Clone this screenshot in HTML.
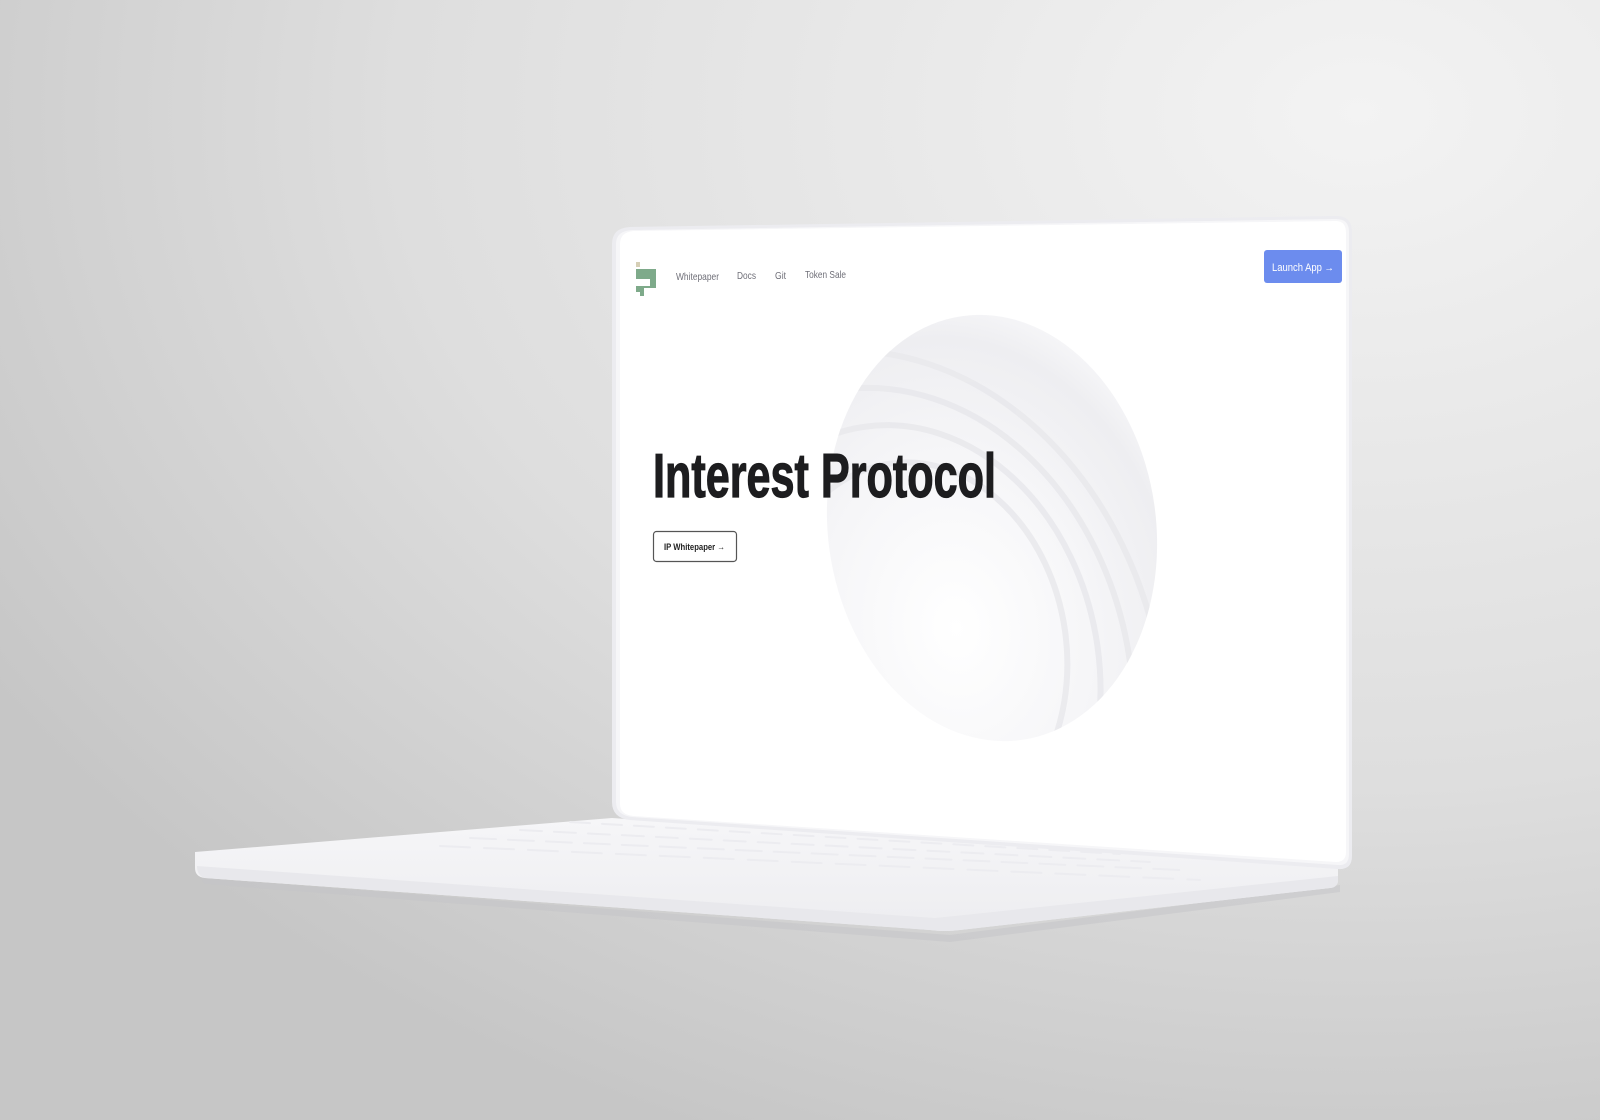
<!DOCTYPE html>
<html><head><meta charset="utf-8"><style>
html,body{margin:0;padding:0;width:1600px;height:1120px;overflow:hidden}
body{background:#d8d8d8}
svg{display:block}
</style></head><body>
<svg width="1600" height="1120" viewBox="0 0 1600 1120" xmlns="http://www.w3.org/2000/svg">
<defs>
<radialGradient id="bg" cx="0.85" cy="0.1" r="1">
<stop offset="0" stop-color="#f3f3f3"/><stop offset="0.6" stop-color="#dedede"/><stop offset="1" stop-color="#c6c6c6"/>
</radialGradient>
<radialGradient id="sph" cx="0.35" cy="0.72" r="0.8">
<stop offset="0" stop-color="#ffffff"/><stop offset="0.5" stop-color="#f6f6f8"/><stop offset="0.85" stop-color="#eeeef1"/><stop offset="1" stop-color="#f8f8fa"/>
</radialGradient>
<linearGradient id="base" x1="0" y1="0" x2="0" y2="1">
<stop offset="0" stop-color="#f6f6f8"/><stop offset="1" stop-color="#ededf0"/>
</linearGradient>
<clipPath id="scr"><path d="M628 244 Q628 232 642 231 L1336 221 Q1346 221 1346 233 L1346 852 Q1346 862 1336 862 L640 816 Q628 815 628 804 Z"/></clipPath>
<clipPath id="sc"><ellipse cx="992" cy="528" rx="164" ry="214" transform="rotate(-8 992 528)"/></clipPath>
</defs>
<rect width="1600" height="1120" fill="url(#bg)"/>
<path d="M200 878 L950 935 L1340 885 L1340 892 L950 942 L205 884 Z" fill="#c4c4c7" opacity="0.5"/>
<path d="M195 852 L612 818 L1338 866 L1338 880 Q1338 887 1330 888 L960 930 Q945 932 930 930 L205 878 Q195 877 195 868 Z" fill="url(#base)"/>
<path d="M197 866 L935 918 L1338 876 L1338 882 Q1336 888 1330 888 L960 930 Q945 932 930 930 L205 878 Q197 876 197 866 Z" fill="#e8e8ec"/>
<g stroke="#ececf0" stroke-width="2" stroke-linecap="round">
<path d="M440 846 L1200 880" stroke-dasharray="30 14"/>
<path d="M470 838 L1180 870" stroke-dasharray="26 12"/>
<path d="M520 830 L1150 862" stroke-dasharray="22 12"/>
<path d="M570 822 L1120 854" stroke-dasharray="20 12"/>
</g>
<path d="M612 244 Q612 228 630 227 L1336 216 Q1352 216 1352 232 L1352 856 Q1352 870 1338 869 L630 820 Q612 818 612 802 Z" fill="#ececf0"/>
<path d="M616 244 Q616 231 632 230 L1336 219 Q1349 219 1349 232 L1349 854 Q1349 866 1338 865 L632 817 Q616 815 616 802 Z" fill="#f6f6f8"/>
<path d="M620 244 Q620 232 634 231 L1336 221 Q1346 221 1346 233 L1346 852 Q1346 862 1336 862 L634 816 Q620 815 620 804 Z" fill="#ffffff"/>
<g clip-path="url(#scr)">
<ellipse cx="992" cy="528" rx="164" ry="214" transform="rotate(-8 992 528)" fill="url(#sph)"/>
<g clip-path="url(#sc)" fill="none" stroke="#e9e9ed" stroke-width="6" opacity="0.9">
<ellipse cx="900" cy="640" rx="150" ry="190" transform="rotate(-8 992 528)"/>
<ellipse cx="880" cy="660" rx="200" ry="250" transform="rotate(-8 992 528)"/>
<ellipse cx="860" cy="680" rx="250" ry="310" transform="rotate(-8 992 528)"/>
<ellipse cx="840" cy="700" rx="300" ry="370" transform="rotate(-8 992 528)"/>
</g>
</g>
<rect x="636" y="262" width="4" height="5" fill="#d6cfb6"/>
<path d="M636 269 H656 V288 H644 V296 H640 V292 H636 V286 H650 V279 H636 Z" fill="#7eaa8a"/>
<g font-family="Liberation Sans, sans-serif" fill="#6f6f78" font-size="10.5">
<text x="676" y="280" textLength="43" lengthAdjust="spacingAndGlyphs">Whitepaper</text>
<text x="737" y="279" textLength="19" lengthAdjust="spacingAndGlyphs">Docs</text>
<text x="775" y="279" textLength="11" lengthAdjust="spacingAndGlyphs">Git</text>
<text x="805" y="278" textLength="41" lengthAdjust="spacingAndGlyphs">Token Sale</text>
</g>
<rect x="1264" y="250" width="78" height="33" rx="3" fill="#6c8cee"/>
<text x="1272" y="271" font-family="Liberation Sans, sans-serif" font-size="11" fill="#ffffff" textLength="62" lengthAdjust="spacingAndGlyphs">Launch App →</text>
<text x="653" y="497" font-family="Liberation Sans, sans-serif" font-weight="bold" font-size="62" fill="#1d1d1f" stroke="#1d1d1f" stroke-width="1.2" textLength="343" lengthAdjust="spacingAndGlyphs">Interest Protocol</text>
<rect x="653.5" y="531.5" width="83" height="30" rx="3" fill="#fff" stroke="#555" stroke-width="1.2"/>
<text x="664" y="550" font-family="Liberation Sans, sans-serif" font-weight="bold" font-size="9.5" fill="#222" textLength="61" lengthAdjust="spacingAndGlyphs">IP Whitepaper →</text>
</svg>
</body></html>
